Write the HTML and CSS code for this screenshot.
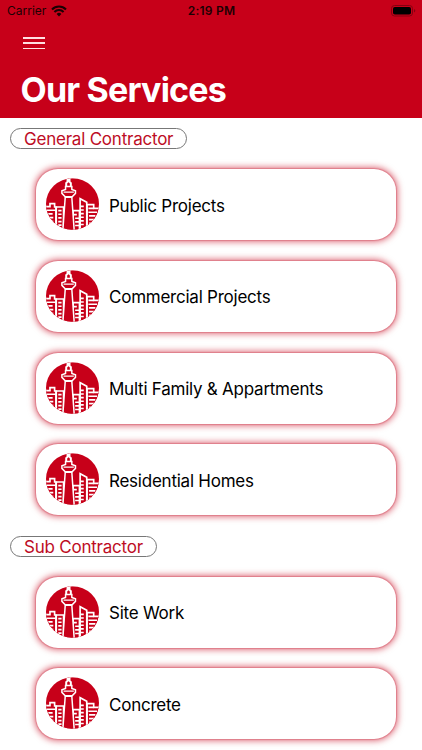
FILE: index.html
```
<!DOCTYPE html>
<html lang="en">
<head>
  <meta charset="UTF-8" />
  <meta name="viewport" content="width=device-width, initial-scale=1.0"/>
  <title>Our Services</title>
  <link rel="stylesheet" href="styles.css">
</head>
<body>

<svg class="symbols" aria-hidden="true">
  <defs>
    <clipPath id="disc"><ellipse cx="80" cy="78" rx="80" ry="78"/></clipPath>
  </defs>
  <symbol id="skyline" viewBox="0 0 160 156">
    <g clip-path="url(#disc)" fill="#c70019" stroke="#fff" stroke-width="5">
      <rect width="160" height="156" stroke="none"/>
      <!-- left buildings -->
      <path d="M-4 86H12V77H26V87H30V170H-4Z"/>
      <path d="M2 97H30"/>
      <path d="M31 170V87H53V170Z"/>
      <path d="M7 108H20M10 119H22M14 130H22M37 98H47M37 109H47M37 120H47M37 131H47M37 142H47"/>
      <!-- right buildings -->
      <path d="M82 170V98H101V170Z"/>
      <path d="M124 80H144V91H166V170H124Z"/>
      <path d="M103 170V62L123 73V170Z"/>
      <path d="M84 110H93M88 121H102M88 132H102M88 143H102M103 85H114M103 96H114M103 107H114M103 118H114M103 129H114M103 140H114M128 91H144M128 103H154M130 114H149M130 125H145M130 136H140"/>
      <!-- tower -->
      <path d="M58 58H78L86 170H50Z" stroke-width="4.5"/>
      <path d="M61 30V15L65 11V-4H71V11L75 15V30Z" stroke-width="6"/>
      <path d="M59 25H78V34L89 38V46L79 56H58L48 46V38L59 34Z" stroke-width="4.5"/>
      <path d="M53 42H84" stroke-width="4"/>
    </g>
  </symbol>
</svg>

<header>
  <div class="status-bar">
    <div class="carrier">
      <span>Carrier</span>
      <svg class="wifi" viewBox="0 0 16 12">
        <path d="M1 4.4a10 10 0 0 1 14 0M3.4 6.9a6.5 6.5 0 0 1 9.2 0" fill="none" stroke="#1c0003" stroke-width="2.1"/>
        <path d="M8 11.5 5.6 9a3.4 3.4 0 0 1 4.8 0Z" fill="#1c0003"/>
      </svg>
    </div>
    <span class="time">2:19 PM</span>
    <svg class="battery" viewBox="0 0 25 12">
      <rect x="0.5" y="0.5" width="21" height="10.5" rx="3" fill="none" stroke="#850011"/>
      <rect x="2" y="2" width="18" height="7.5" rx="1.8" fill="#000"/>
      <path d="M23 4v3.6q1.3-.5 1.3-1.8T23 4" fill="#850011"/>
    </svg>
  </div>
  <div class="menu-button"><span></span><span></span><span></span></div>
  <h1>Our Services</h1>
</header>

<main>
  <h2>General Contractor</h2>
  <div class="services">
    <div class="card"><svg class="icon"><use href="#skyline"/></svg><span>Public Projects</span></div>
    <div class="card"><svg class="icon"><use href="#skyline"/></svg><span>Commercial Projects</span></div>
    <div class="card"><svg class="icon"><use href="#skyline"/></svg><span>Multi Family &amp; Appartments</span></div>
    <div class="card"><svg class="icon"><use href="#skyline"/></svg><span>Residential Homes</span></div>
  </div>

  <h2 class="sub">Sub Contractor</h2>
  <div class="services">
    <div class="card"><svg class="icon"><use href="#skyline"/></svg><span>Site Work</span></div>
    <div class="card"><svg class="icon"><use href="#skyline"/></svg><span>Concrete</span></div>
  </div>
</main>

</body>
</html>
```
FILE: styles.css
```
* {
  box-sizing: border-box;
}

body {
  font-family: Inter, "Liberation Sans", sans-serif;
  background-color: #fff;
  margin: 0;
  height: 750px;
  overflow: hidden;
}

.symbols {
  display: block;
  width: 0;
  height: 0;
}

header {
  background-color: #c70019;
  height: 118px;
  border-bottom: 1px solid #c70019;
}

.status-bar {
  display: grid;
  grid-template-columns: 1fr auto 1fr;
  align-items: center;
  height: 21px;
  padding: 0 6px 0 7px;
  font-size: 12px;
  color: #1c0003;
}

.carrier {
  display: flex;
  align-items: center;
  gap: 5px;
}

.wifi {
  width: 16px;
  height: 12px;
}

.time {
  font-weight: 600;
  letter-spacing: 0.25px;
}

.battery {
  width: 25px;
  height: 12px;
  justify-self: end;
}

.menu-button {
  display: flex;
  flex-direction: column;
  justify-content: space-between;
  width: 22px;
  height: 12px;
  margin: 16px 0 0 23px;
}

.menu-button span {
  height: 1.5px;
  background-color: #ffdfe2;
}

h1 {
  margin: 21px 0 0 20.5px;
  font-size: 34px;
  line-height: 40px;
  font-weight: 700;
  letter-spacing: -0.8px;
  color: #fff;
}

main {
  padding: 10.4px 0 0 10px;
}

h2 {
  width: fit-content;
  height: 21px;
  margin: 0;
  padding: 0 13px;
  border: 1px solid #777;
  border-radius: 11px;
  font-size: 17px;
  line-height: 21px;
  font-weight: 400;
  letter-spacing: -0.22px;
  color: #bd0d25;
}

.sub {
  margin-top: 20.2px;
}

.services {
  display: flex;
  flex-direction: column;
  gap: 20.7px;
  padding: 20px 26px 0;
}

.card {
  display: flex;
  align-items: center;
  height: 71px;
  padding-left: 10px;
  border-radius: 22px;
  background-color: #fff;
  box-shadow: 0 0 1px 1px rgba(190, 20, 45, 0.25), 0 0 6px 2px rgba(199, 0, 25, 0.55);
  font-size: 17px;
  letter-spacing: -0.24px;
  color: #000;
}

.card span {
  padding-top: 1.5px;
}

.icon {
  width: 53px;
  height: 52px;
  margin: 0 10px 1px 0;
}
```
